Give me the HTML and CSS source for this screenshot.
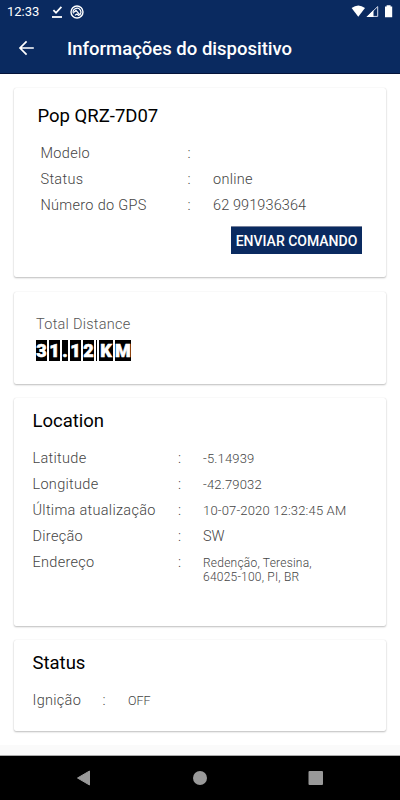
FILE: index.html
```html
<!DOCTYPE html>
<html lang="pt-br">

<head>
    <meta charset="UTF-8">
    <meta name="viewport" content="width=device-width, initial-scale=1.0">
    <title>Informações do dispositivo</title>
    <link rel="stylesheet" href="styles.css">
</head>
<body>
    <header class="header">
        <div class="status-bar">
            <span class="clock">12:33</span>
            <svg class="check-icon" width="12" height="14" viewBox="0 0 12 14" fill="none" stroke="#fff">
                <path d="M2.4 5.2L5 7.8L10.4 1.8" stroke-width="1.8"/>
                <path d="M1 12H11" stroke-width="1.8"/>
            </svg>
            <svg class="app-icon" width="14" height="14" viewBox="0 0 14 14" fill="none" stroke="#fff">
                <circle cx="7" cy="7" r="6" stroke-width="1.4"/>
                <path d="M3.5 8.5A3.8 3.8 0 1 1 9.5 9.9" stroke-width="1.2"/>
                <path d="M4 7.2L6 5.4L10.4 10.4M5 10.2L7 9L9 10.8" stroke-width="1.3"/>
            </svg>
            <svg class="signal-icons" width="42" height="13" viewBox="0 0 42 13">
                <path d="M0.6 3Q7.3 -2.2 14 3L7.3 11.8Z" fill="#fff"/>
                <path d="M16.6 11.4H26.7V1.6Z" fill="none" stroke="#d5daea"/>
                <path d="M15.4 12L22.5 5V12Z" fill="#fff"/>
                <path d="M34 1.6H35.6V0.2H39.6V1.6H41.2V12.2H34Z" fill="#fff"/>
            </svg>
        </div>
        <div class="toolbar">
            <svg class="back" width="16" height="16" viewBox="0 0 16 16" fill="none" stroke="#fff" stroke-width="1.7">
                <path d="M15.8 8H2M8.6 1.4L2 8L8.6 14.6"/>
            </svg>
            <h1>Informações do dispositivo</h1>
        </div>
    </header>

    <main class="content">
        <section class="card device">
            <h2>Pop QRZ-7D07</h2>
            <div class="rows">
                <div class="row"><span>Modelo</span><span>:</span><span></span></div>
                <div class="row"><span>Status</span><span>:</span><span>online</span></div>
                <div class="row"><span>Número do GPS</span><span>:</span><span class="phone">62 991936364</span></div>
            </div>
            <button class="command">ENVIAR COMANDO</button>
        </section>

        <section class="card distance">
            <div class="distance-label">Total Distance</div>
            <div class="odometer">
                <span class="digit">3</span>
                <span class="digit">1</span>
                <span class="digit dot">.</span>
                <span class="digit">1</span>
                <span class="digit">2</span>
                <span class="digit line"></span>
                <span class="digit unit-k">K</span>
                <span class="digit unit-m">M</span>
            </div>
        </section>

        <section class="card location">
            <h2>Location</h2>
            <div class="row"><span>Latitude</span><span>:</span><span class="small">-5.14939</span></div>
            <div class="row"><span>Longitude</span><span>:</span><span class="small">-42.79032</span></div>
            <div class="row"><span>Última atualização</span><span>:</span><span class="small">10-07-2020 12:32:45 AM</span></div>
            <div class="row"><span>Direção</span><span>:</span><span class="direction">SW</span></div>
            <div class="row"><span>Endereço</span><span>:</span><span class="address">Redenção, Teresina,<br>64025-100, PI, BR</span></div>
        </section>

        <section class="card status">
            <h2>Status</h2>
            <div class="row"><span>Ignição</span><span>:</span><span class="state">OFF</span></div>
        </section>
    </main>

    <nav class="nav-bar">
        <svg width="16" height="16" viewBox="0 0 16 16"><path d="M1.5 8L13.5 1V15Z" fill="#999" stroke="#999" stroke-linejoin="round"/></svg>
        <svg width="16" height="16" viewBox="0 0 16 16"><circle cx="8" cy="8" r="7" fill="#999"/></svg>
        <svg width="16" height="16" viewBox="0 0 16 16"><rect x="0.5" y="1" width="14.5" height="14" rx="1" fill="#999"/></svg>
    </nav>
</body>
</html>
```

FILE: styles.css
```css
* {
    box-sizing: border-box;
}
body {
    margin: 0;
    width: 400px;
    height: 800px;
    display: flex;
    flex-direction: column;
    overflow: hidden;
    background-color: #fafafa;
    font-family: Roboto, sans-serif;
    color: #444;
}
h1, h2 {
    margin: 0;
}
.header {
    height: 74px;
    background-color: #0a2a60;
    border-bottom: 1px solid #04133a;
    color: #fff;
}
.status-bar {
    height: 23px;
    padding: 0 7px;
    display: flex;
    align-items: center;
}
.clock {
    width: 44px;
    font-size: 13px;
}
.app-icon {
    margin-left: 7px;
}
.signal-icons {
    margin-left: auto;
}
.toolbar {
    height: 50px;
    padding-left: 17.5px;
    display: flex;
    align-items: center;
    gap: 33.5px;
}
.toolbar h1 {
    padding-top: 2px;
    font-size: 18.5px;
    font-weight: 500;
    line-height: 24px;
}
.content {
    height: 671px;
    padding: 14px 14px 0;
    display: flex;
    flex-direction: column;
    gap: 14px;
    background-color: #fff;
}
.card {
    flex-shrink: 0;
    border-radius: 2px;
    background-color: #fff;
    box-shadow: 0 1px 2px rgba(0, 0, 0, 0.25), 0 0 1px rgba(0, 0, 0, 0.15);
}
.card h2 {
    font-size: 18.5px;
    font-weight: 400;
    line-height: 24px;
    color: #000;
}
.row {
    display: grid;
    grid-template-columns: 145.5px 25px 1fr;
    height: 26px;
    line-height: 26px;
    font-size: 14.5px;
    font-weight: 300;
    letter-spacing: 0.3px;
}
.small {
    font-size: 13px;
    letter-spacing: 0.17px;
}
.phone {
    letter-spacing: 0.1px;
}
.direction {
    letter-spacing: 0;
}
.state {
    font-size: 12.5px;
    letter-spacing: 0;
}
.device {
    height: 189px;
    padding: 16px 24px 0 23.5px;
    display: flex;
    flex-direction: column;
}
.device .rows {
    margin: 13px 0 7px 3px;
}
.device .row {
    grid-template-columns: 147px 25.5px 1fr;
}
.command {
    align-self: flex-end;
    width: 131px;
    height: 28px;
    padding: 1px 0 0;
    border: none;
    border-top: 1px solid #76809a;
    background-color: #0a2a60;
    color: #fff;
    font-family: inherit;
    font-size: 14px;
    font-weight: 500;
}
.distance {
    height: 92px;
    margin-top: 1px;
    padding: 23px 22px 0;
}
.distance-label {
    font-size: 14.5px;
    font-weight: 300;
    line-height: 20px;
    letter-spacing: 0.27px;
    color: #555;
}
.odometer {
    margin-top: 5px;
    display: flex;
    gap: 2px;
}
.digit {
    width: 11px;
    height: 21px;
    background-color: #000;
    color: #fff;
    font-size: 18px;
    font-weight: 900;
    line-height: 21px;
    text-align: center;
    -webkit-text-stroke: 0.6px #fff;
}
.dot {
    width: 6px;
}
.line {
    width: 1px;
}
.unit-k {
    width: 14px;
}
.unit-m {
    width: 16px;
}
.location {
    height: 228px;
    padding: 11px 19px 0 18.5px;
}
.location h2 {
    margin-bottom: 13px;
}
.address {
    padding-top: 6px;
    font-size: 12px;
    line-height: 14px;
    letter-spacing: 0.22px;
}
.status {
    height: 91px;
    padding: 11px 19px 0 18.5px;
}
.status h2 {
    margin-bottom: 13px;
}
.status .row {
    grid-template-columns: 70px 25.5px 1fr;
}
.nav-bar {
    height: 45px;
    margin-top: auto;
    padding: 0 76px;
    display: flex;
    justify-content: space-between;
    align-items: center;
    border-top: 1px solid #aaa;
    background-color: #000;
}
```
